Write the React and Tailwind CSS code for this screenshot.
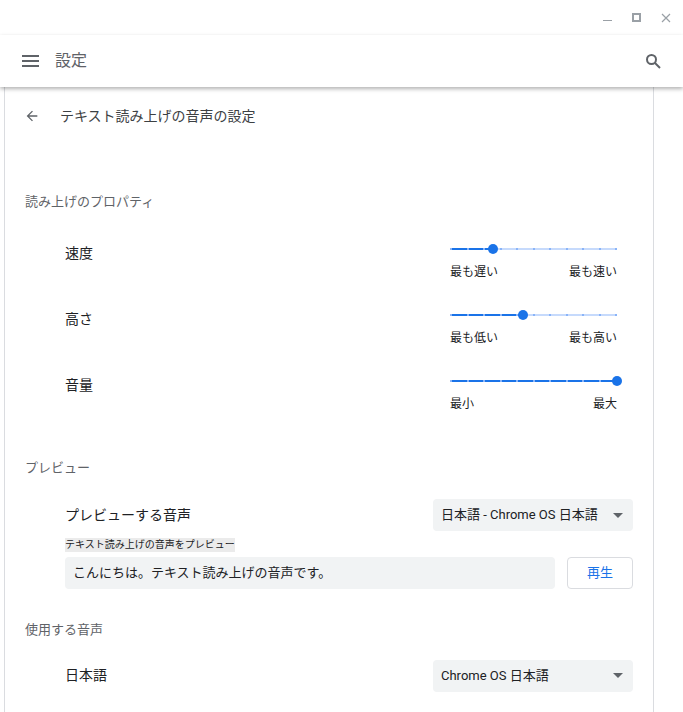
const font = { fontFamily: '"Roboto","Noto Sans CJK JP",sans-serif' };

function Slider({ pct, min, max }) {
  const ticks = Array.from({ length: 11 });
  return (
    <div className="mr-[16px] w-[167px]">
      <div className="relative h-[12px]">
        <div className="absolute left-0 right-0 top-[5px] h-[2px] bg-[#c6dafc]" />
        <div className="absolute left-0 top-[5px] h-[2px] bg-[#1a73e8]" style={{ width: `${pct}%` }} />
        <div className="absolute left-0 right-0 top-[5px] flex justify-between">
          {ticks.map((_, i) => (
            <div key={i} className="h-[2px] w-[2px] bg-[#8ab4f8]" />
          ))}
        </div>
        <div className="absolute h-[10px] w-[10px] -translate-x-1/2 rounded-full bg-[#1a73e8]" style={{ left: `${pct}%`, top: 1 }} />
      </div>
      <div className="mt-[8px] flex justify-between text-[12px] text-[#202124]">
        <span>{min}</span>
        <span>{max}</span>
      </div>
    </div>
  );
}

function Select({ label }) {
  return (
    <div className="flex h-[32px] w-[200px] items-center justify-between rounded bg-[#f1f3f4] pl-[8px] pr-[10px] text-[13px] text-[#202124]">
      <span>{label}</span>
      <svg width="10" height="5" viewBox="0 0 10 5"><path d="M0 0h10L5 5z" fill="#5f6368" /></svg>
    </div>
  );
}

export default function App() {
  return (
    <div className="flex h-[712px] w-[683px] flex-col overflow-hidden bg-white" style={font}>
      <div className="flex h-[35px] shrink-0 items-center justify-end gap-[20px] pr-[12px]">
        <div className="mt-[6px] h-[1px] w-[9px] bg-[#9aa0a6]" />
        <div className="h-[9px] w-[9px] border-2 border-[#9aa0a6]" />
        <svg width="10" height="10" viewBox="0 0 10 10"><path d="M1 1l8 8M9 1l-8 8" stroke="#9aa0a6" strokeWidth="1.2" /></svg>
      </div>
      <div className="relative z-10 flex h-[52px] shrink-0 items-center justify-between px-[22px] shadow-[0_2px_4px_rgba(0,0,0,0.3)]">
        <div className="flex items-center gap-[16px]">
          <svg width="17" height="12" viewBox="0 0 17 12"><path d="M0 1h17M0 6h17M0 11h17" stroke="#5f6368" strokeWidth="2" /></svg>
          <span className="text-[16px] text-[#5f6368]">設定</span>
        </div>
        <svg width="16" height="16" viewBox="0 0 16 16"><circle cx="6.5" cy="6.5" r="4.5" stroke="#5f6368" strokeWidth="2" fill="none" /><path d="M10 10l5 5" stroke="#5f6368" strokeWidth="2" /></svg>
      </div>
      <div className="ml-[4px] w-[650px] flex-1 border-x border-[#dadce0] text-[#202124]">
        <div className="flex h-[58px] items-center gap-[20px] pl-[19px]">
          <svg width="16" height="16" viewBox="0 0 24 24"><path d="M20 11H7.8l5.6-5.6L12 4l-8 8 8 8 1.4-1.4L7.8 13H20z" fill="#5f6368" /></svg>
          <span className="text-[14px] text-[#3c4043]">テキスト読み上げの音声の設定</span>
        </div>
        <div className="pl-[20px] pr-[20px]">
          <div className="pt-[47px] text-[13px] text-[#5f6368]">読み上げのプロパティ</div>
          <div className="mt-[31px] flex items-start justify-between pl-[40px]">
            <span className="text-[14px]">速度</span>
            <Slider pct={26} min="最も遅い" max="最も速い" />
          </div>
          <div className="mt-[28px] flex items-start justify-between pl-[40px]">
            <span className="text-[14px]">高さ</span>
            <Slider pct={44} min="最も低い" max="最も高い" />
          </div>
          <div className="mt-[28px] flex items-start justify-between pl-[40px]">
            <span className="text-[14px]">音量</span>
            <Slider pct={100} min="最小" max="最大" />
          </div>
          <div className="mt-[45px] text-[13px] text-[#5f6368]">プレビュー</div>
          <div className="mt-[22px] flex items-center justify-between pl-[40px]">
            <span className="text-[14px]">プレビューする音声</span>
            <Select label="日本語 - Chrome OS 日本語" />
          </div>
          <div className="pl-[40px]">
            <span className="mt-[3px] inline-block bg-[#ebebeb] text-[10px] leading-[14px]">テキスト読み上げの音声をプレビュー</span>
            <div className="mt-[2px] flex items-center gap-[12px]">
              <div className="flex h-[32px] flex-1 items-center rounded bg-[#f1f3f4] px-[8px] text-[13px]">こんにちは。テキスト読み上げの音声です。</div>
              <button className="h-[32px] w-[66px] rounded border border-[#dadce0] text-[13px] text-[#1a73e8]">再生</button>
            </div>
          </div>
          <div className="mt-[31px] text-[13px] text-[#5f6368]">使用する音声</div>
          <div className="mt-[20px] flex items-center justify-between pl-[40px]">
            <span className="text-[14px]">日本語</span>
            <Select label="Chrome OS 日本語" />
          </div>
          <div className="mt-[18px] flex items-center justify-between pl-[40px]">
            <span className="text-[14px]">その他の言語</span>
            <svg width="12" height="8" viewBox="0 0 12 8" className="mr-[8px]"><path d="M1 1l5 5 5-5" stroke="#5f6368" strokeWidth="2" fill="none" /></svg>
          </div>
        </div>
      </div>
    </div>
  );
}
